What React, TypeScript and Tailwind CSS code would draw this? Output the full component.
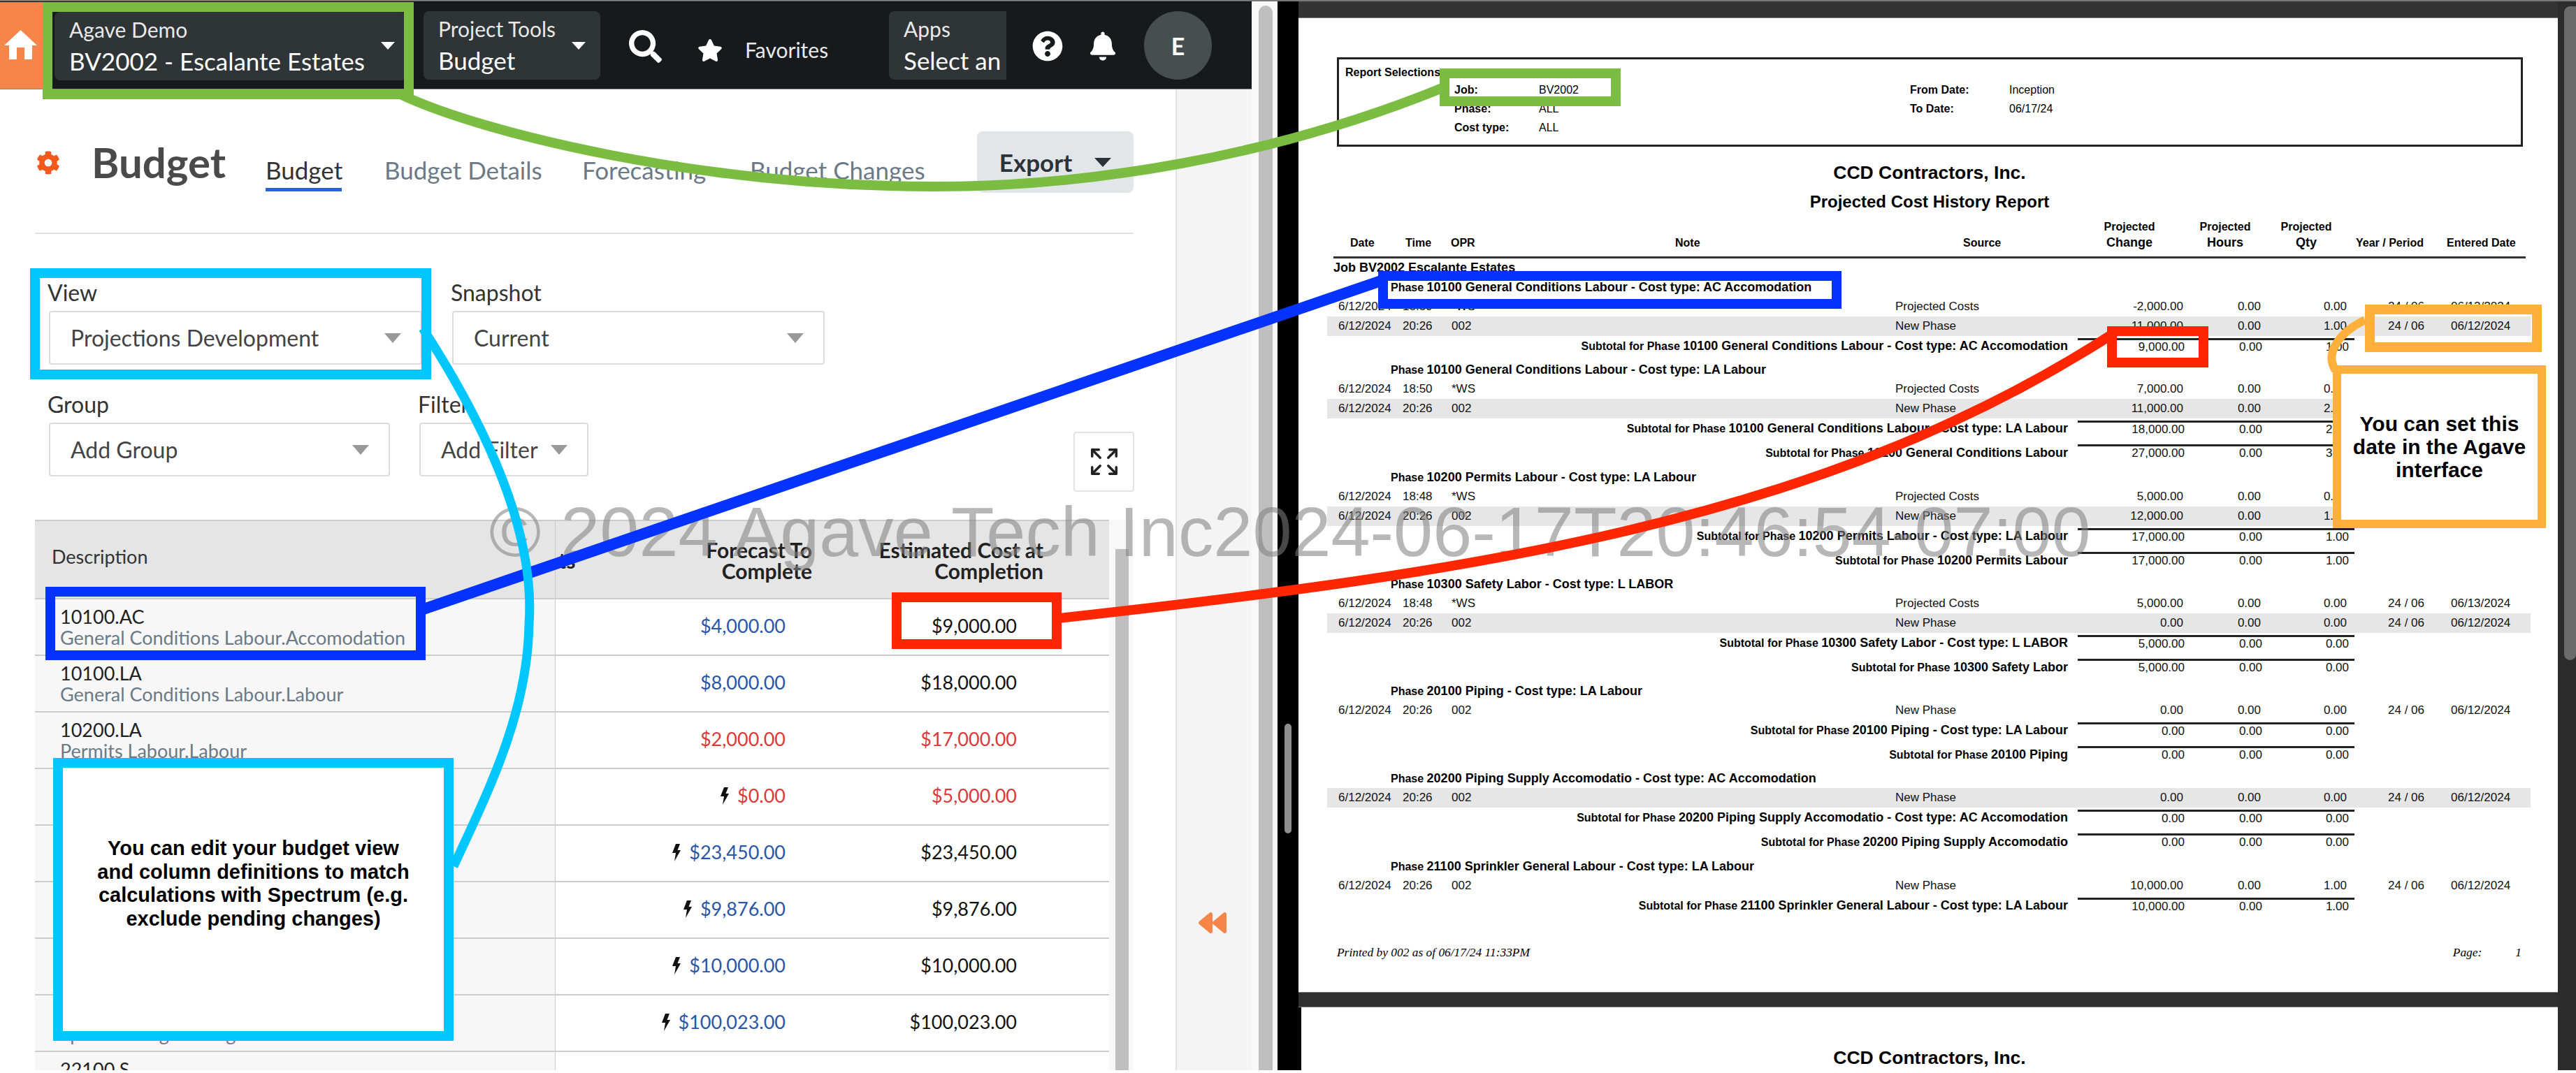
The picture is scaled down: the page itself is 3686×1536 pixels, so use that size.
import { FaBackward, FaBell, FaCog, FaQuestionCircle, FaSearch, FaStar } from "react-icons/fa";
import { Expand } from "lucide-react";

type Cell = { value: string; tone?: "blue" | "red" | "black"; bolt?: boolean };
type TableRow = { code?: string; name?: string; forecast: Cell; estimate: Cell };

const tableRows: TableRow[] = [
  { code: "10100.AC", name: "General Conditions Labour.Accomodation", forecast: { value: "$4,000.00", tone: "blue" }, estimate: { value: "$9,000.00" } },
  { code: "10100.LA", name: "General Conditions Labour.Labour", forecast: { value: "$8,000.00", tone: "blue" }, estimate: { value: "$18,000.00" } },
  { code: "10200.LA", name: "Permits Labour.Labour", forecast: { value: "$2,000.00", tone: "red" }, estimate: { value: "$17,000.00", tone: "red" } },
  { forecast: { value: "$0.00", tone: "red", bolt: true }, estimate: { value: "$5,000.00", tone: "red" } },
  { forecast: { value: "$23,450.00", tone: "blue", bolt: true }, estimate: { value: "$23,450.00" } },
  { forecast: { value: "$9,876.00", tone: "blue", bolt: true }, estimate: { value: "$9,876.00" } },
  { forecast: { value: "$10,000.00", tone: "blue", bolt: true }, estimate: { value: "$10,000.00" } },
  { code: "21100.EN", name: "Sprinkler Engineering.Hour Accomodation", forecast: { value: "$100,023.00", tone: "blue", bolt: true }, estimate: { value: "$100,023.00" } },
  { code: "22100.S", forecast: { value: "" }, estimate: { value: "" } },
];

type Line =
  | { kind: "head"; label: string; rest: string; gap?: boolean }
  | { kind: "row"; time: string; opr: string; source: string; change: string; hours: string; qty: string; entered: string; shaded?: boolean }
  | { kind: "sub" | "total"; label: string; rest: string; change: string; hours: string; qty: string };

const ws = (time: string, change: string, qty: string, entered: string): Line => ({ kind: "row", time, opr: "*WS", source: "Projected Costs", change, hours: "0.00", qty, entered });
const np = (change: string, qty: string, shaded = true): Line => ({ kind: "row", time: "20:26", opr: "002", source: "New Phase", change, hours: "0.00", qty, entered: "06/12/2024", shaded });

const lines: Line[] = [
  { kind: "head", label: "Phase ", rest: "10100 General Conditions Labour - Cost type: AC Accomodation" },
  ws("18:50", "-2,000.00", "0.00", "06/13/2024"),
  np("11,000.00", "1.00"),
  { kind: "sub", label: "Subtotal for Phase ", rest: "10100 General Conditions Labour - Cost type: AC Accomodation", change: "9,000.00", hours: "0.00", qty: "1.00" },
  { kind: "head", label: "Phase ", rest: "10100 General Conditions Labour - Cost type: LA Labour", gap: true },
  ws("18:50", "7,000.00", "0.00", "06/13/2024"),
  np("11,000.00", "2.00"),
  { kind: "sub", label: "Subtotal for Phase ", rest: "10100 General Conditions Labour - Cost type: LA Labour", change: "18,000.00", hours: "0.00", qty: "2.00" },
  { kind: "total", label: "Subtotal for Phase ", rest: "10100 General Conditions Labour", change: "27,000.00", hours: "0.00", qty: "3.00" },
  { kind: "head", label: "Phase ", rest: "10200 Permits Labour - Cost type: LA Labour", gap: true },
  ws("18:48", "5,000.00", "0.00", "06/13/2024"),
  np("12,000.00", "1.00"),
  { kind: "sub", label: "Subtotal for Phase ", rest: "10200 Permits Labour - Cost type: LA Labour", change: "17,000.00", hours: "0.00", qty: "1.00" },
  { kind: "total", label: "Subtotal for Phase ", rest: "10200 Permits Labour", change: "17,000.00", hours: "0.00", qty: "1.00" },
  { kind: "head", label: "Phase ", rest: "10300 Safety Labor - Cost type: L LABOR", gap: true },
  ws("18:48", "5,000.00", "0.00", "06/13/2024"),
  np("0.00", "0.00"),
  { kind: "sub", label: "Subtotal for Phase ", rest: "10300 Safety Labor - Cost type: L LABOR", change: "5,000.00", hours: "0.00", qty: "0.00" },
  { kind: "total", label: "Subtotal for Phase ", rest: "10300 Safety Labor", change: "5,000.00", hours: "0.00", qty: "0.00" },
  { kind: "head", label: "Phase ", rest: "20100 Piping - Cost type: LA Labour", gap: true },
  np("0.00", "0.00", false),
  { kind: "sub", label: "Subtotal for Phase ", rest: "20100 Piping - Cost type: LA Labour", change: "0.00", hours: "0.00", qty: "0.00" },
  { kind: "total", label: "Subtotal for Phase ", rest: "20100 Piping", change: "0.00", hours: "0.00", qty: "0.00" },
  { kind: "head", label: "Phase ", rest: "20200 Piping Supply Accomodatio - Cost type: AC Accomodation", gap: true },
  np("0.00", "0.00"),
  { kind: "sub", label: "Subtotal for Phase ", rest: "20200 Piping Supply Accomodatio - Cost type: AC Accomodation", change: "0.00", hours: "0.00", qty: "0.00" },
  { kind: "total", label: "Subtotal for Phase ", rest: "20200 Piping Supply Accomodatio", change: "0.00", hours: "0.00", qty: "0.00" },
  { kind: "head", label: "Phase ", rest: "21100 Sprinkler General Labour - Cost type: LA Labour", gap: true },
  np("10,000.00", "1.00", false),
  { kind: "sub", label: "Subtotal for Phase ", rest: "21100 Sprinkler General Labour - Cost type: LA Labour", change: "10,000.00", hours: "0.00", qty: "1.00" },
];

function Caret({ className }: { className: string }) {
  return <span className={`h-0 w-0 shrink-0 ${className}`} />;
}

function NavSelect({ label, value, className }: { label: string; value: string; className: string }) {
  return (
    <div className={`relative h-[98px] shrink-0 overflow-hidden rounded-lg bg-[#2f3437] pl-[21px] pt-[5px] ${className}`}>
      <div className="whitespace-nowrap text-[30px] leading-[40px] text-[#e8e8e8]">{label}</div>
      <div className="mt-[3px] whitespace-nowrap text-[35px] leading-[44px] text-white">{value}</div>
    </div>
  );
}

function NavBar() {
  return (
    <div className="flex h-[125px] items-start border-b border-[#888] bg-[#161a1d]">
      <div className="h-full w-[62px] shrink-0 bg-[#f58549] pl-[6px] pt-[40px]">
        <svg viewBox="0 0 47 42" className="h-[42px] w-[47px]" fill="#fff">
          <path d="M23.5 0L47 22H40V42H29V25H18V42H7V22H0Z" />
        </svg>
      </div>
      <NavSelect label="Agave Demo" value="BV2002 - Escalante Estates" className="ml-[16px] mt-[14px] w-[504px]" />
      <div className="absolute left-[545px] top-[60px]"><Caret className="block border-x-[10px] border-t-[11px] border-x-transparent border-t-white" /></div>
      <NavSelect label="Project Tools" value="Budget" className="ml-[24px] mt-[13px] w-[253px]" />
      <div className="absolute left-[818px] top-[60px]"><Caret className="block border-x-[10px] border-t-[11px] border-x-transparent border-t-white" /></div>
      <FaSearch className="ml-[41px] mt-[40px] h-[47px] w-[47px] shrink-0 text-white" />
      <FaStar className="ml-[51px] mt-[52px] h-[34px] w-[36px] shrink-0 text-white" />
      <span className="ml-[32px] mt-[48px] w-[124px] shrink-0 whitespace-nowrap text-[30px] leading-[40px] text-[#e8e8e8]">Favorites</span>
      <NavSelect label="Apps" value="Select an App" className="ml-[82px] mt-[13px] w-[168px] rounded-r-none" />
      <FaQuestionCircle className="ml-[37px] mt-[41px] h-[44px] w-[44px] shrink-0 text-white" />
      <FaBell className="ml-[39px] mt-[41px] h-[44px] w-[36px] shrink-0 text-white" />
      <div className="ml-[41px] mt-[13px] flex h-[98px] w-[97px] shrink-0 items-center justify-center rounded-full bg-[#474e50] text-[34px] font-bold text-white">
        E
      </div>
    </div>
  );
}

function SelectBox({ label, value, className }: { label: string; value: string; className: string }) {
  return (
    <div className={className}>
      <div className="h-[42px] text-[32px] leading-[42px] text-[#333]">{label}</div>
      <div className="ml-[2px] mt-[5px] flex h-[77px] items-center justify-between rounded border-2 border-[#dcdcdc] bg-white pl-[29px] pr-[28px]">
        <span className="whitespace-nowrap text-[32px] text-[#444]">{value}</span>
        <Caret className="border-x-[12px] border-t-[14px] border-x-transparent border-t-[#999]" />
      </div>
    </div>
  );
}

function Bolt() {
  return (
    <svg viewBox="0 0 15 25" className="h-[25px] w-[15px] shrink-0" fill="#111">
      <path d="M7 0H13L9.5 9H14L5 25L7 13H2Z" />
    </svg>
  );
}

function Money({ cell }: { cell: Cell }) {
  const tone = cell.tone === "blue" ? "text-[#2a56a8]" : cell.tone === "red" ? "text-[#d93a3a]" : "text-[#111]";
  return (
    <span className="flex items-center justify-end gap-[11px]">
      {cell.bolt && <Bolt />}
      <span className={tone}>{cell.value}</span>
    </span>
  );
}

function BudgetTable() {
  return (
    <div className="mt-[40px] w-[1537px] shrink-0 border-t-2 border-[#ccc] text-[27px]">
      <div className="grid h-[110px] grid-cols-[745px_367px_331px_94px] bg-[#e5e5e5]">
        <div className="flex items-center border-r border-[#ccc] pb-[8px] pl-[24px] text-[#333]">Description</div>
        <div className="flex items-start justify-between pl-[4px] pt-[26px] text-[30px] font-bold leading-[30px] text-[#222]">
          <span className="mt-[15px]">ts</span>
          <span className="text-right">Forecast To<br />Complete</span>
        </div>
        <div className="pt-[26px] text-right text-[30px] font-bold leading-[30px] text-[#222]">
          Estimated Cost at<br />Completion
        </div>
      </div>
      {tableRows.map((row, i) => (
        <div key={i} className="grid h-[81px] grid-cols-[745px_329px_331px] border-t-2 border-[#ccc]">
          <div className="border-r border-[#ccc] bg-[#f7f7f7] pl-[36px] pt-[10px] leading-[30px]">
            <div className="h-[30px] text-[#222]">{row.code}</div>
            <div className="whitespace-nowrap text-[#6b7a86]">{row.name}</div>
          </div>
          <div className="flex items-center justify-end pb-[2px]"><Money cell={row.forecast} /></div>
          <div className="flex items-center justify-end pb-[2px]"><Money cell={row.estimate} /></div>
        </div>
      ))}
    </div>
  );
}

function BudgetPanel() {
  return (
    <div className="flex h-[1408px] bg-white">
      <div className="w-[1684px] shrink-0 border-r-2 border-[#e3e3e3] pl-[50px]">
        <div className="flex h-[205px] w-[1572px] items-start">
          <FaCog className="ml-[2px] mt-[88px] h-[34px] w-[34px] shrink-0 text-[#f25a1d]" />
          <span className="ml-[45px] mt-[67px] w-[188px] shrink-0 text-[60px] font-bold leading-[74px] text-[#4a4a4a]">Budget</span>
          <div className="ml-[61px] mt-[93px] h-[53px] w-[109px] shrink-0 whitespace-nowrap border-b-[5px] border-[#2563d8] text-[35px] leading-[44px] text-[#333]">Budget</div>
          <span className="ml-[61px] mt-[93px] w-[224px] shrink-0 whitespace-nowrap text-[35px] leading-[44px] text-[#6b7a86]">Budget Details</span>
          <span className="ml-[59px] mt-[93px] w-[180px] shrink-0 whitespace-nowrap text-[35px] leading-[44px] text-[#6b7a86]">Forecasting</span>
          <span className="ml-[60px] mt-[93px] whitespace-nowrap text-[35px] leading-[44px] text-[#6b7a86]">Budget Changes</span>
          <div className="ml-auto mt-[60px] flex h-[88px] w-[224px] items-center justify-center gap-[32px] rounded-lg bg-[#e3e6e8] text-[35px] font-bold text-[#2b3238]">
            Export <Caret className="border-x-[12px] border-t-[13px] border-x-transparent border-t-[#2b3238]" />
          </div>
        </div>
        <div className="h-[2px] w-[1572px] bg-[#e2e2e2]" />
        <div className="mt-[63px] flex gap-[41px] pl-[18px]">
          <SelectBox label="View" value="Projections Development" className="w-[536px]" />
          <SelectBox label="Snapshot" value="Current" className="w-[535px]" />
        </div>
        <div className="mt-[36px] flex items-start pl-[18px]">
          <SelectBox label="Group" value="Add Group" className="w-[490px]" />
          <SelectBox label="Filter" value="Add Filter" className="ml-[40px] w-[244px]" />
          <button className="ml-[694px] mt-[60px] flex h-[86px] w-[87px] items-center justify-center rounded border-2 border-[#e2e2e2] bg-white text-[#222]">
            <Expand className="h-[46px] w-[46px]" strokeWidth={1.8} />
          </button>
        </div>
        <div className="flex">
          <BudgetTable />
          <div className="mt-[40px] h-[800px] w-[35px] bg-[#f8f8f8] pl-[9px] pt-[42px]">
            <div className="h-full w-[19px] bg-[#bfbfbf]" />
          </div>
        </div>
      </div>
      <div className="relative flex-1 bg-[#f4f4f4]">
        <FaBackward className="absolute left-[30px] top-[1173px] h-[40px] w-[42px] text-[#f58549]" />
      </div>
    </div>
  );
}

function ReportRow({ line }: { line: Line }) {
  if (line.kind === "head") {
    return (
      <div className={`h-[28px] pl-[91px] text-[18px] font-bold leading-[28px] text-black ${line.gap ? "mt-[6.3px]" : ""}`}>
        <span className="text-[16px]">{line.label}</span>{line.rest}
      </div>
    );
  }
  if (line.kind === "row") {
    return (
      <div className={`grid h-[28px] grid-cols-[108px_70px_635px_268px_144px_111px_123px_149px_114px] text-[17px] leading-[28px] text-[#111] ${line.shaded ? "bg-[#e6e6e6]" : ""}`}>
        <span className="pl-[16px]">6/12/2024</span>
        <span>{line.time}</span>
        <span>{line.opr}</span>
        <span>{line.source}</span>
        <span className="text-right">{line.change}</span>
        <span className="text-right">{line.hours}</span>
        <span className="text-right">{line.qty}</span>
        <span className="pl-[59px]">24 / 06</span>
        <span>{line.entered}</span>
      </div>
    );
  }
  return (
    <div className={`flex h-[28px] ${line.kind === "total" ? "mt-[7px]" : ""}`}>
      <div className="w-[1060px] whitespace-nowrap text-right text-[18px] font-bold leading-[28px] text-black">
        <span className="text-[16px]">{line.label}</span>{line.rest}
      </div>
      <div className={`ml-[14px] grid h-[24px] w-[396px] grid-cols-[153px_111px_124px_8px] border-t-[3px] border-[#222] text-[17px] leading-[20px] text-[#111] ${line.kind === "sub" ? "mt-[3px]" : "mt-[2px]"}`}>
        <span className="text-right">{line.change}</span>
        <span className="text-right">{line.hours}</span>
        <span className="text-right">{line.qty}</span>
      </div>
    </div>
  );
}

function Report() {
  return (
    <div className="w-[1802px] shrink-0 font-['Liberation_Sans',sans-serif]">
      <div className="h-[26px] border-b border-[#777] bg-[#333]" />
      <div className="h-[1394px] bg-white pt-[56px]">
        <div className="ml-[55px] flex h-[128px] w-[1697px] border-[3px] border-[#222] text-[16px] text-black">
          <div className="w-[165px] whitespace-nowrap pl-[9px] pt-[7px] font-bold">Report Selections</div>
          <div className="grid w-[652px] grid-cols-[121px_1fr] content-start pt-[30px] leading-[27px]">
            <b>Job:</b><span>BV2002</span>
            <b>Phase:</b><span>ALL</span>
            <b>Cost type:</b><span>ALL</span>
          </div>
          <div className="grid grid-cols-[142px_1fr] content-start pt-[30px] leading-[27px]">
            <b>From Date:</b><span>Inception</span>
            <b>To Date:</b><span>06/17/24</span>
          </div>
        </div>
        <div className="ml-[4px] mt-[20px] text-center text-[26.5px] font-bold leading-[34px] text-black">CCD Contractors, Inc.</div>
        <div className="ml-[4px] mt-[8px] text-center text-[24px] font-bold leading-[34px] text-black">Projected Cost History Report</div>
        <div className="ml-[41px] mt-[1px] flex h-[60px] items-end text-[16px] font-bold leading-[22px] text-black">
          <div className="w-[112px] pb-[8px] pl-[33px]">Date</div>
          <div className="w-[65px] pb-[8px]">Time</div>
          <div className="w-[321px] pb-[8px]">OPR</div>
          <div className="w-[412px] pb-[8px]">Note</div>
          <div className="w-[158px] pb-[8px]">Source</div>
          <div className="w-[160px] pb-[8px] text-center">Projected<br /><span className="text-[18px]">Change</span></div>
          <div className="w-[114px] pb-[8px] text-center">Projected<br /><span className="text-[18px]">Hours</span></div>
          <div className="w-[118px] pb-[8px] text-center">Projected<br /><span className="text-[18px]">Qty</span></div>
          <div className="w-[142px] pb-[8px] pl-[12px]">Year / Period</div>
          <div className="whitespace-nowrap pb-[8px]">Entered Date</div>
        </div>
        <div className="ml-[50px] h-[3px] w-[1706px] bg-[#333]" />
        <div className="ml-[50px] h-[27px] text-[18px] font-bold leading-[27px] text-black">Job BV2002 Escalante Estates</div>
        <div className="ml-[41px] w-[1722px]">
          {lines.map((line, i) => <ReportRow key={i} line={line} />)}
        </div>
        <div className="ml-[55px] mt-[41px] flex w-[1698px] justify-between pr-[3px] font-['Liberation_Serif',serif] text-[17.4px] italic leading-[24px] text-black">
          <span>Printed by 002 as of 06/17/24 11:33PM</span>
          <span className="flex gap-[48px]"><span>Page:</span><span>1</span></span>
        </div>
      </div>
      <div className="h-[22px] border-y border-[#777] bg-[#2f2f2f]" />
      <div className="ml-[4px] h-[94px] bg-white pt-[55px] text-center text-[26.5px] font-bold leading-[34px] text-black">CCD Contractors, Inc.</div>
    </div>
  );
}

function Annotations() {
  return (
    <>
      <div className="absolute left-[700px] top-[704px] whitespace-nowrap font-['Liberation_Sans',sans-serif] text-[100.8px] leading-[115px] text-[#80808090]">
        © 2024 Agave Tech Inc2024-06-17T20:46:54-07:00
      </div>
      <svg className="absolute inset-0 h-[1536px] w-[3686px]" viewBox="0 0 3686 1536" fill="none">
        <path d="M575 136C690 190 1000 267 1338 267C1560 267 1820 225 2066 125" stroke="#7abd42" strokeWidth="14" />
        <path d="M606 872L1976 402" stroke="#0433ff" strokeWidth="16" />
        <path d="M1515 885C2100 820 2600 750 3020 480" stroke="#ff2600" strokeWidth="14" />
        <path d="M605 470C715 640 765 780 757 893C755 1020 700 1130 649 1240" stroke="#00c7ff" strokeWidth="13" />
        <path d="M3384 458C3340 480 3328 510 3342 530" stroke="#ffb03b" strokeWidth="12" />
      </svg>
      <div className="absolute left-[61px] top-[3px] h-[139px] w-[531px] border-[14px] border-[#7abd42]" />
      <div className="absolute left-[2060px] top-[98px] h-[54px] w-[259px] border-[14px] border-[#7abd42]" />
      <div className="absolute left-[43px] top-[384px] h-[159px] w-[574px] border-[14px] border-[#00c7ff]" />
      <div className="absolute left-[65px] top-[840px] h-[105px] w-[544px] border-[14px] border-[#0433ff]" />
      <div className="absolute left-[1972px] top-[388px] h-[54px] w-[663px] border-[14px] border-[#0433ff]" />
      <div className="absolute left-[1276px] top-[848px] h-[81px] w-[243px] border-[14px] border-[#ff2600]" />
      <div className="absolute left-[3015px] top-[467px] h-[59px] w-[145px] border-[14px] border-[#ff2600]" />
      <div className="absolute left-[3384px] top-[436px] h-[68px] w-[253px] border-[14px] border-[#ffb03b]" />
      <div className="absolute left-[76px] top-[1085px] h-[405px] w-[573px] border-[14px] border-[#00c7ff] bg-white pt-[99px] text-center font-['Liberation_Sans',sans-serif] text-[29px] font-bold leading-[33.5px] text-black">
        You can edit your budget view<br />and column definitions to match<br />calculations with Spectrum (e.g.<br />exclude pending changes)
      </div>
      <div className="absolute left-[3338px] top-[523px] h-[233px] w-[305px] border-[12px] border-[#ffb03b] bg-white pt-[55px] text-center font-['Liberation_Sans',sans-serif] text-[30px] font-bold leading-[33px] text-black">
        You can set this<br />date in the Agave<br />interface
      </div>
    </>
  );
}

export default function App() {
  return (
    <div className="relative flex h-[1536px] w-[3686px] overflow-hidden bg-black font-['Lato',sans-serif]">
      <div className="relative w-[1791px] shrink-0 pt-[3px]">
        <NavBar />
        <BudgetPanel />
      </div>
      <div className="w-[37px] shrink-0 bg-[#f8f8f8] pl-[10px] pt-[8px]">
        <div className="h-[1528px] w-[20px] rounded-t-full bg-[#bfbfbf]" />
      </div>
      <div className="w-[30px] shrink-0 pl-[10px] pt-[1036px]">
        <div className="h-[157px] w-[10px] rounded-full bg-[#8e8e8e]" />
      </div>
      <Report />
      <div className="flex-1 bg-[#2c2c2c] pl-[9px] pt-[9px]">
        <div className="h-[936px] w-[17px] rounded-l-full rounded-b-full bg-[#6b6b6b]" />
      </div>
      <div className="absolute inset-x-0 top-0 h-[2px] bg-[#777]" />
      <div className="absolute inset-x-0 bottom-0 h-[4px] bg-white" />
      <Annotations />
    </div>
  );
}
